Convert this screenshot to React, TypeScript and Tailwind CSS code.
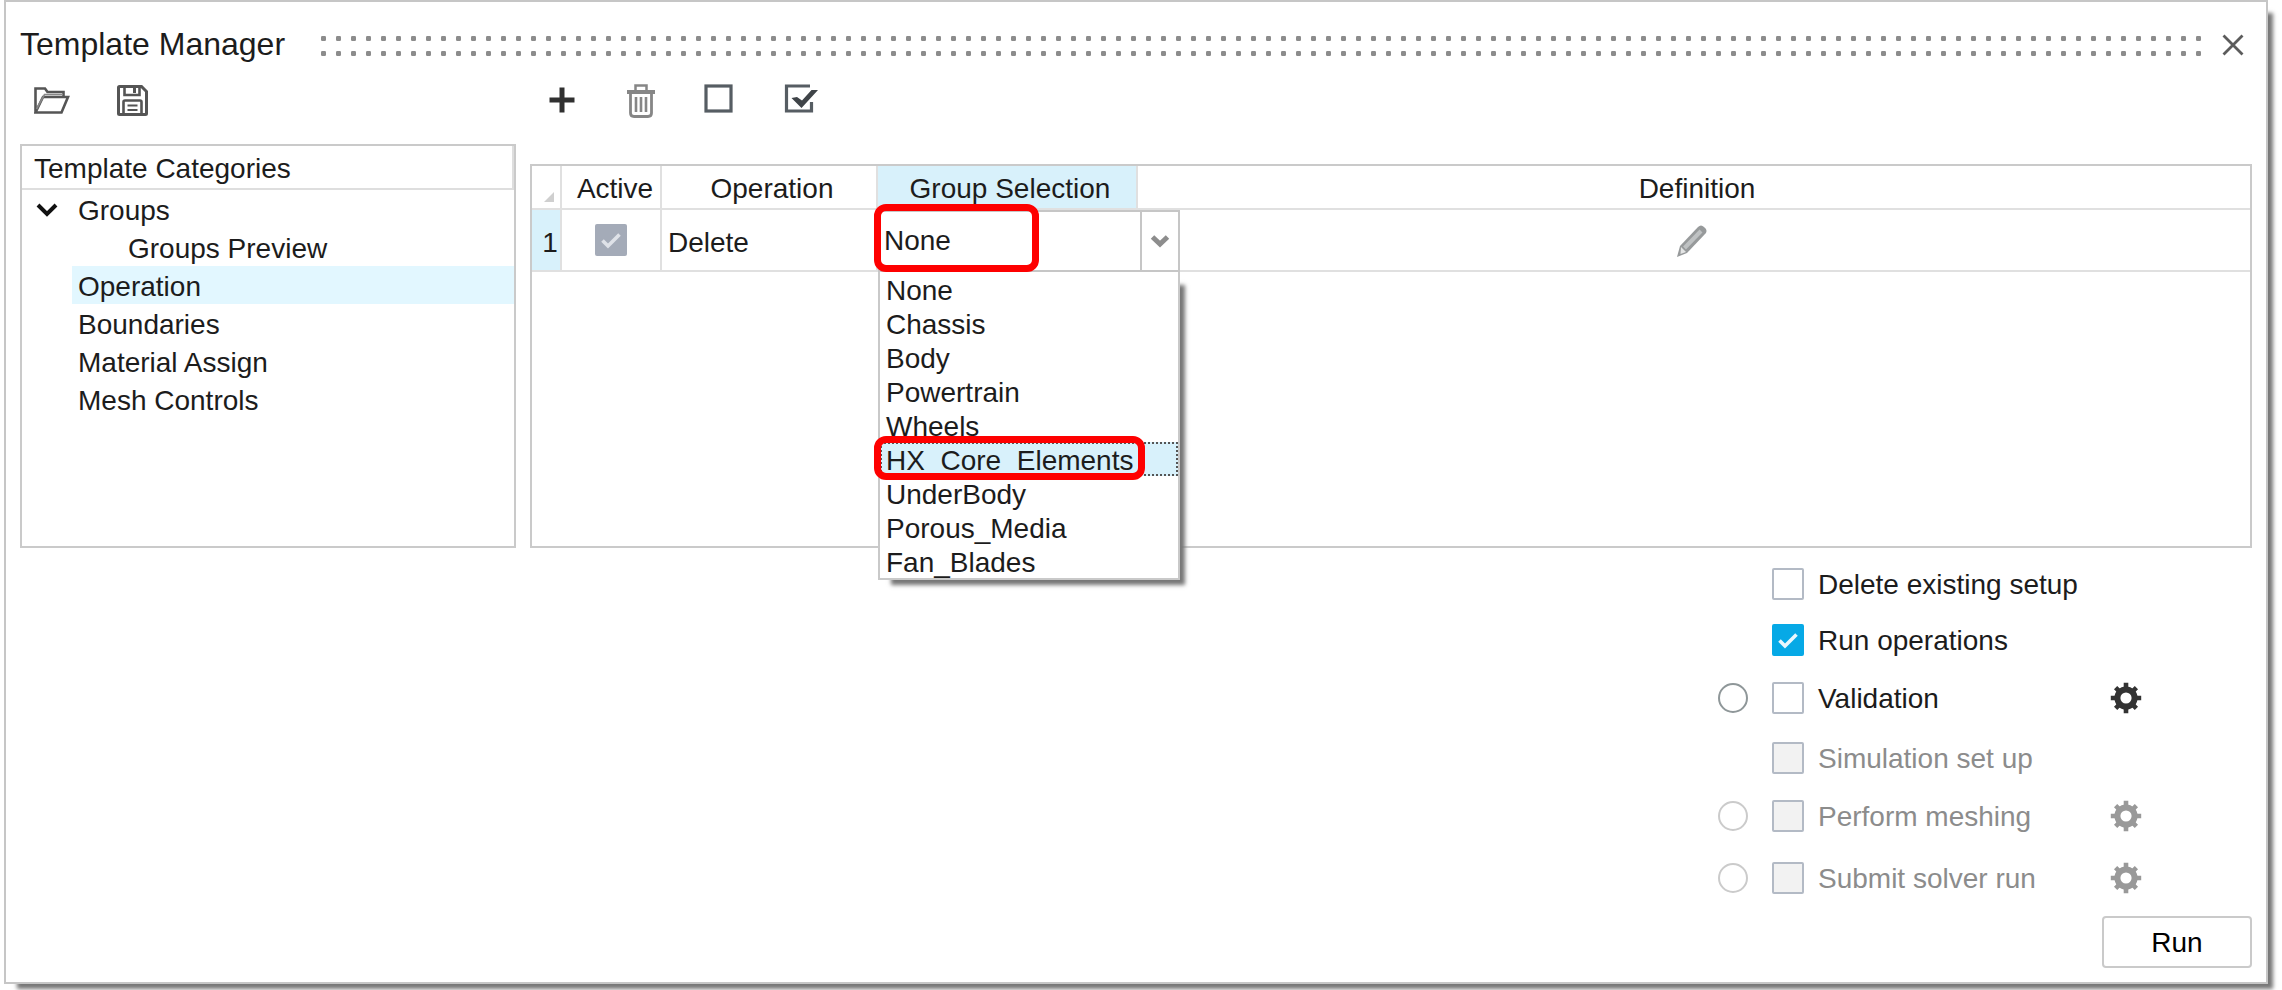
import type { ReactNode } from "react";

type Option = {
  id: string;
  label: string;
  gap: string;
  checked?: boolean;
  disabled?: boolean;
  radio?: boolean;
  gear?: boolean;
};

const categories = ["Operation", "Boundaries", "Material Assign", "Mesh Controls"];

const groups = [
  "None",
  "Chassis",
  "Body",
  "Powertrain",
  "Wheels",
  "HX_Core_Elements",
  "UnderBody",
  "Porous_Media",
  "Fan_Blades",
];

const options: Option[] = [
  { id: "delete-setup", label: "Delete existing setup", gap: "mt-5" },
  { id: "run-operations", label: "Run operations", gap: "mt-6", checked: true },
  { id: "validation", label: "Validation", gap: "mt-[26px]", radio: true, gear: true },
  { id: "simulation", label: "Simulation set up", gap: "mt-7", disabled: true },
  { id: "meshing", label: "Perform meshing", gap: "mt-[26px]", disabled: true, radio: true, gear: true },
  { id: "solver", label: "Submit solver run", gap: "mt-[30px]", disabled: true, radio: true, gear: true },
];

function DotGrip() {
  return (
    <svg className="mt-9 h-5 min-w-0 flex-1" aria-hidden="true">
      <defs>
        <pattern id="grip" width="15" height="15" patternUnits="userSpaceOnUse">
          <rect x="0" y="0" width="5" height="5" rx="1.200" fill="#8c8c8c" />
        </pattern>
      </defs>
      <rect width="100%" height="20" fill="url(#grip)" />
    </svg>
  );
}

function CheckMark({ color }: { color: string }) {
  return (
    <svg viewBox="0 0 32 32" className="pointer-events-none absolute inset-0 size-8" aria-hidden="true">
      <path d="M7.500 16.500l5.500 5.500L24.500 10.500" fill="none" stroke={color} strokeWidth="3.600" />
    </svg>
  );
}

function Gear({ className }: { className: string }) {
  return (
    <svg viewBox="0 0 32 32" className={className} aria-hidden="true">
      <path
        d="M16 .8V8M16 24v7.200M.8 16H8M24 16h7.200M5.600 5.600l5 5M21.400 21.400l5 5M5.600 26.400l5-5M21.400 10.600l5-5"
        stroke="currentColor"
        strokeWidth="4.600"
      />
      <circle cx="16" cy="16" r="8.600" fill="none" stroke="currentColor" strokeWidth="6" />
    </svg>
  );
}

function ToolButton({ label, className, children }: { label: string; className: string; children: ReactNode }) {
  return (
    <button type="button" aria-label={label} className={`block size-9 ${className}`}>
      {children}
    </button>
  );
}

function Toolbar() {
  return (
    <div className="flex pl-3.5">
      <ToolButton label="Open" className="">
        <svg viewBox="0 0 36 36" className="size-9" fill="none" stroke="#555" strokeWidth="2.600">
          <path d="M1.500 30.500V6.500h9.500l2.500 3.500h16v4.500M1.500 30.500L9 15h25l-6.500 15.500z" />
          <path d="M29 12.500H10.500L2.500 27" strokeWidth="1.600" stroke="#888" />
        </svg>
      </ToolButton>
      <ToolButton label="Save" className="ml-11">
        <svg viewBox="0 0 36 36" className="size-9" fill="none" stroke="#555" strokeWidth="3">
          <path d="M4.500 5.500q0-1 1-1h22l5 5v22q0 1-1 1h-26q-1 0-1-1z" />
          <path d="M10.500 5v8h15V5M9.500 32V20q0-1.500 1.500-1.500h15q1.500 0 1.500 1.500v12" strokeWidth="2.600" />
          <path d="M20.500 5v6" strokeWidth="3" />
          <path d="M13.500 23.500h10M13.500 28h10" strokeWidth="2.200" />
        </svg>
      </ToolButton>
      <ToolButton label="Add" className="ml-[394px]">
        <svg viewBox="0 0 36 36" className="size-9">
          <path d="M18 5.500v25M5.500 18h25" stroke="#303030" strokeWidth="5" />
        </svg>
      </ToolButton>
      <ToolButton label="Delete" className="ml-[43px]">
        <svg viewBox="0 0 36 36" className="size-9" fill="none" stroke="#868686">
          <path d="M4 10h28" strokeWidth="4" />
          <path d="M12.500 8.500v-5h11v5" strokeWidth="2.500" />
          <path d="M7.500 11v20q0 3.500 3.500 3.500h14q3.500 0 3.500-3.500V11" strokeWidth="2.800" />
          <path d="M13 15v15M18 15v15M23 15v15" strokeWidth="2.600" />
        </svg>
      </ToolButton>
      <ToolButton label="Clear all" className="ml-[42px]">
        <svg viewBox="0 0 36 36" className="size-9">
          <rect x="5" y="4" width="25" height="25" fill="none" stroke="#565d63" strokeWidth="3.200" />
        </svg>
      </ToolButton>
      <ToolButton label="Select all" className="ml-[46px]">
        <svg viewBox="0 0 36 36" className="size-9" fill="none">
          <path d="M27 4H3.500v25h25v-9" stroke="#565d63" strokeWidth="3.200" />
          <path d="M8.500 16l5.500-1 5 3.500L28.500 8H35L18.500 26z" fill="#3f4448" />
        </svg>
      </ToolButton>
    </div>
  );
}

function CategoryTree() {
  return (
    <nav className="w-[496px] shrink-0 border-2 border-[#cacaca]" aria-label="Template Categories">
      <h2 className="h-11 border-r-2 border-b-2 border-[#dedede] pt-[3px] pl-3 leading-[40px]">Template Categories</h2>
      <ul>
        <li>
          <div className="flex h-[38px] items-center pt-1 pl-3.5">
            <svg viewBox="0 0 22 16" className="mr-5 h-4 w-[22px]" aria-hidden="true">
              <path d="M2 2l9 9 9-9" fill="none" stroke="#111" strokeWidth="4" />
            </svg>
            <span>Groups</span>
          </div>
          <ul>
            <li className="h-[38px] pt-[3px] pl-[106px] leading-9">Groups Preview</li>
          </ul>
        </li>
        {categories.map((name) => (
          <li
            key={name}
            aria-current={name === "Operation"}
            className="ml-[50px] h-[38px] pt-[3px] pl-1.5 leading-9 aria-[current=true]:bg-[#e2f7ff]"
          >
            {name}
          </li>
        ))}
      </ul>
    </nav>
  );
}

function GroupCombo() {
  return (
    <div className="absolute top-0 left-0 z-10 w-[302px]">
      <div className="flex h-[62px] border-2 border-[#c6c6c6] bg-white">
        <select
          aria-label="Group Selection"
          defaultValue="None"
          className="min-w-0 flex-1 appearance-none border-r-2 border-[#c6c6c6] bg-white pl-1 outline-none"
        >
          {groups.map((g) => (
            <option key={g}>{g}</option>
          ))}
        </select>
        <div className="flex w-9 items-center justify-center">
          <svg viewBox="0 0 20 14" className="h-3.5 w-5" aria-hidden="true">
            <path d="M2.500 3l7.500 7 7.500-7" fill="none" stroke="#8d8d8d" strokeWidth="5" />
          </svg>
        </div>
      </div>
      <ul
        role="listbox"
        aria-label="Groups"
        className="border-2 border-t-0 border-[#c9c9c9] bg-white shadow-[9px_9px_4px_-4px_#777]"
      >
        {groups.map((g) => (
          <li
            key={g}
            role="option"
            aria-selected={g === "HX_Core_Elements"}
            className="relative h-[34px] pt-[3px] pl-1.5 leading-8 aria-selected:bg-[#d8f1fb] aria-selected:outline-2 aria-selected:-outline-offset-2 aria-selected:outline-[#555] aria-selected:outline-dotted"
          >
            {g}
            {g === "HX_Core_Elements" && (
              <span className="pointer-events-none absolute -top-1.5 -left-1.5 h-11 w-[271px] rounded-xl border-7 border-[#fe0000]" />
            )}
          </li>
        ))}
      </ul>
      <span className="pointer-events-none absolute -top-1.5 -left-1 h-[68px] w-[165px] rounded-xl border-7 border-[#fe0000]" />
    </div>
  );
}

function OperationTable() {
  const head = "border-r-2 border-b-2 border-[#e0e0e0] pt-1 pl-1.5 font-normal";
  return (
    <div className="mt-5 min-w-0 flex-1 border-2 border-[#cacaca]">
      <table className="w-full table-fixed border-separate border-spacing-0">
        <colgroup>
          <col className="w-[30px]" />
          <col className="w-[100px]" />
          <col className="w-[216px]" />
          <col className="w-[260px]" />
          <col />
        </colgroup>
        <thead>
          <tr className="h-11">
            <td className="border-r-2 border-b-2 border-[#e0e0e0] pb-1.5 pl-3 align-bottom">
              <svg viewBox="0 0 10 10" className="size-2.5" aria-hidden="true">
                <path d="M10 0v10H0z" fill="#cfcfcf" />
              </svg>
            </td>
            <th className="border-r-2 border-b-2 border-[#e0e0e0] pt-1 pl-2 font-normal">Active</th>
            <th className={head}>Operation</th>
            <th className={`${head} bg-[#d8f1fb]`}>Group Selection</th>
            <th className="border-b-2 border-[#e0e0e0] pt-1 pl-1.5 font-normal">Definition</th>
          </tr>
        </thead>
        <tbody>
          <tr className="h-[62px]">
            <th className="border-r-2 border-b-2 border-[#e0e0e0] bg-[#d8f1fb] pt-1.5 pl-2 font-normal">1</th>
            <td className="border-r-2 border-b-2 border-[#e0e0e0]">
              <span className="relative mx-auto block size-8">
                <input
                  type="checkbox"
                  aria-label="Active"
                  defaultChecked
                  disabled
                  className="block size-8 appearance-none rounded-xs bg-[#a4abb8]"
                />
                <CheckMark color="#dfe2e8" />
              </span>
            </td>
            <td className="border-r-2 border-b-2 border-[#e0e0e0] pt-1.5 pl-1.5">Delete</td>
            <td className="relative border-b-2 border-[#e0e0e0]">
              <GroupCombo />
            </td>
            <td className="border-b-2 border-[#e0e0e0] pt-0.5 pr-1">
              <button type="button" aria-label="Edit definition" className="mx-auto block size-9">
                <svg viewBox="0 0 36 36" className="size-9" aria-hidden="true">
                  <path d="M3 34l3-11L24 4q3-3 6 0l1.500 1.500q2 2.500 0 5L13 30z" fill="#979a9b" />
                  <path d="M10.500 25L27 8" stroke="#bfc2c3" strokeWidth="4" />
                  <path d="M7 24l5 5-5.500 2z" fill="#e4e5e5" />
                </svg>
              </button>
            </td>
          </tr>
        </tbody>
      </table>
    </div>
  );
}

function RunOptions() {
  return (
    <fieldset className="ml-auto w-[534px]">
      {options.map((o) => (
        <div
          key={o.id}
          className={`flex h-8 items-center ${o.gap} ${o.disabled ? "text-[#8c8c8c]" : ""}`}
        >
          <div className="w-[54px] shrink-0">
            {o.radio && (
              <input
                type="radio"
                name="stop-at"
                aria-label={`Stop at ${o.label}`}
                disabled={o.disabled}
                className="block size-[30px] appearance-none rounded-full border-2 border-[#8f9799] bg-white disabled:border-[#cbcbcb]"
              />
            )}
          </div>
          <span className="relative block size-8 shrink-0">
            <input
              id={o.id}
              type="checkbox"
              defaultChecked={o.checked}
              disabled={o.disabled}
              className="block size-8 appearance-none rounded-xs border-2 border-[#b3bac5] bg-white checked:border-[#06a9e6] checked:bg-[#06a9e6] disabled:bg-[#f2f2f2]"
            />
            {o.checked && <CheckMark color="#e9f8fe" />}
          </span>
          <label htmlFor={o.id} className="w-[306px] pt-0.5 pl-3.5">
            {o.label}
          </label>
          {o.gear && (
            <button type="button" aria-label={`${o.label} settings`} disabled={o.disabled} className="block">
              <Gear className={o.disabled ? "size-8 text-[#999]" : "size-8 text-[#333]"} />
            </button>
          )}
        </div>
      ))}
    </fieldset>
  );
}

export default function App() {
  return (
    <div className="min-h-screen bg-white pr-3.5 pb-1.5 pl-1 font-['Liberation_Sans',Arial,sans-serif] text-[28px] leading-8 text-[#1c1c1c]">
      <main className="border-2 border-[#c6c6c6] bg-white pr-3.5 pb-3.5 pl-3.5 shadow-[9px_9px_4px_-4px_#777]">
        <header className="flex h-20">
          <h1 className="mr-9 pt-[22px] text-[32px] leading-10 whitespace-nowrap">Template Manager</h1>
          <div className="-mt-0.5 flex min-w-0 flex-1">
            <DotGrip />
          </div>
          <button type="button" aria-label="Close" className="mt-[31px] mr-[7px] ml-4 block size-6">
            <svg viewBox="0 0 24 24" className="size-6">
              <path d="M2.500 2.500l19 19M21.500 2.500l-19 19" stroke="#5c5c5c" strokeWidth="2.800" />
            </svg>
          </button>
        </header>
        <Toolbar />
        <div className="mt-[26px] flex min-h-[404px] gap-3.5">
          <CategoryTree />
          <OperationTable />
        </div>
        <RunOptions />
        <div className="mt-[22px] flex justify-end">
          <button type="button" className="h-[52px] w-[150px] rounded-sm border-2 border-[#cacaca] bg-white pt-0.5 text-black">
            Run
          </button>
        </div>
      </main>
    </div>
  );
}
